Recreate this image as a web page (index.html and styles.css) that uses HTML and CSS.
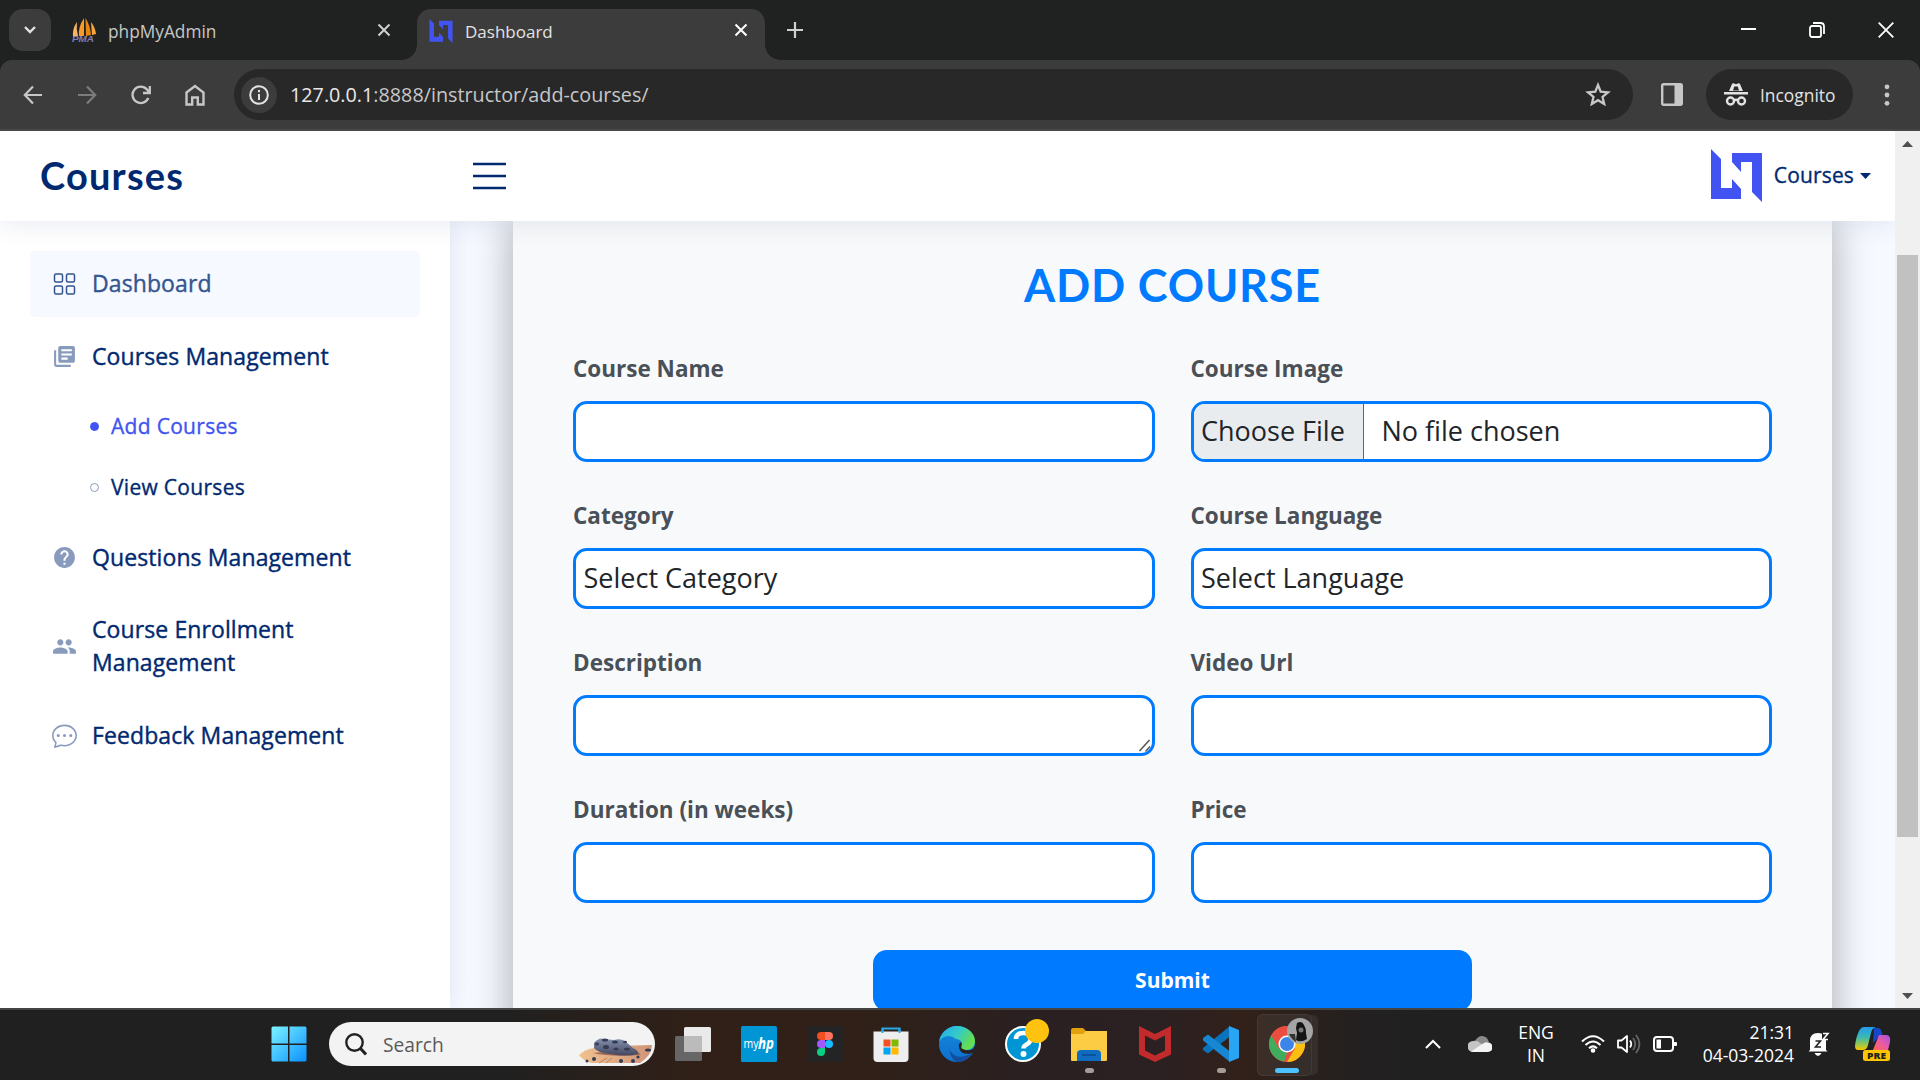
FILE: index.html
```html
<!DOCTYPE html>
<html lang="en">
<head>
<meta charset="utf-8">
<title>Dashboard</title>
<link rel="stylesheet" href="styles.css">
</head>
<body>
<div class="screen">

<header class="tabstrip">
  <div class="tab-search"><svg width="14" height="10" viewBox="0 0 14 10"><path d="M2 2l5 5 5-5" fill="none" stroke="#e3e3e3" stroke-width="2.4"/></svg></div>
  <div class="tab">
    <svg class="favicon" width="26" height="28" viewBox="0 0 26 28">
      <path d="M6 5Q1 12 2 20l5-1Q5 12 6 5z" fill="#f9b463"/><path d="M13 1Q7 10 8 19h5z" fill="#f79a2c"/><path d="M14.500 1l.5 18 5-1Q19 8 14.500 1z" fill="#e8850f"/><path d="M20 5l1 13 4-1Q24 10 20 5z" fill="#f9a33c"/>
      <text class="pma" x="1" y="25" textLength="22" lengthAdjust="spacingAndGlyphs">PMA</text>
    </svg>
    <span class="tab-title t-pma">phpMyAdmin</span>
    <svg class="tab-close" width="14" height="14" viewBox="0 0 14 14"><path d="M1.500 1.500l11 11m0-11l-11 11" stroke="#d0d0d0" stroke-width="2"/></svg>
  </div>
  <div class="tab active">
    <svg class="favicon" width="24" height="24" viewBox="0 0 51 53"><path d="M0 0l10 10v29h11v-9l9 10v10H0zM21 4h30v49l-10-10V13H30v10l-9-10z" fill="#4154f1"/></svg>
    <span class="tab-title t-dash">Dashboard</span>
    <svg class="tab-close" width="14" height="14" viewBox="0 0 14 14"><path d="M1.500 1.500l11 11m0-11l-11 11" stroke="#fff" stroke-width="2"/></svg>
  </div>
  <svg class="new-tab" width="16" height="16" viewBox="0 0 16 16"><path d="M8 0v16M0 8h16" stroke="#d0d0d0" stroke-width="2.200"/></svg>
  <div class="win-controls">
    <svg width="15" height="16" viewBox="0 0 15 16"><path d="M0 7h15" stroke="#fff" stroke-width="2"/></svg>
    <svg width="16" height="16" viewBox="0 0 16 16" fill="none" stroke="#fff" stroke-width="1.800"><rect x="1" y="4" width="11" height="11" rx="2"/><path d="M4 1h7.500Q15 1 15 4.500V12"/></svg>
    <svg width="16" height="16" viewBox="0 0 16 16"><path d="M.7.7l14.600 14.600M15.300.7L.7 15.300" stroke="#fff" stroke-width="1.800"/></svg>
  </div>
</header>

<div class="toolbar">
  <div class="nav-icons">
    <svg width="20" height="20" viewBox="0 0 20 20" fill="none" stroke="#c7c7c7" stroke-width="2.200"><path d="M19 10H2.500M10 1.500L1.800 10l8.200 8.500"/></svg>
    <svg width="20" height="20" viewBox="0 0 20 20" fill="none" stroke="#7c7c7c" stroke-width="2.200"><path d="M1 10h16.500M10 1.500l8.200 8.500-8.200 8.500"/></svg>
    <svg width="20" height="20" viewBox="0 0 20 20" fill="none" stroke="#c7c7c7" stroke-width="2.300"><path d="M17.300 13A8.200 8.200 0 1 1 16 4.500L18.500 7.500M18.800 1v7H12"/></svg>
    <svg width="20" height="22" viewBox="0 0 20 22" fill="none" stroke="#c7c7c7" stroke-width="2.400"><path d="M1.500 8.500L10 2l8.500 6.500v12h-5.700v-7H7.200v7H1.500z"/></svg>
  </div>
  <div class="omnibox">
    <span class="site-info"><svg width="20" height="20" viewBox="0 0 20 20"><circle cx="10" cy="10" r="8.800" fill="none" stroke="#e3e3e3" stroke-width="2"/><path d="M10 9v6M10 5v2.200" stroke="#e3e3e3" stroke-width="2"/></svg></span>
    <span class="url"><b>127.0.0.1</b>:8888/instructor/add-courses/</span>
    <svg class="star" width="26" height="24" viewBox="0 0 26 24"><path d="M13 3l2.700 6.700 7.300.6-5.500 4.700 1.700 7L13 18.200 6.800 22l1.700-7L3 10.300l7.300-.6z" fill="none" stroke="#c7c7c7" stroke-width="2.300"/></svg>
  </div>
  <svg class="panel" width="22" height="23" viewBox="0 0 22 23"><rect x="1.200" y="1.200" width="19.600" height="20.600" rx="1.500" fill="none" stroke="#c7c7c7" stroke-width="2.400"/><path d="M13.500 1h7.500v21h-7.500z" fill="#c7c7c7"/></svg>
  <div class="incognito">
    <svg width="24" height="23" viewBox="0 0 24 23"><path d="M0 9h24v2.500H0zM5 8L8 1q.4-1 1.500-.7L12 1.200 14.500.3Q15.600 0 16 1l3 7z" fill="#e3e3e3"/><path d="M9 7.500L10.300 3.500h3.400L15 7.500z" fill="#282828"/><g fill="none" stroke="#e3e3e3" stroke-width="2.400"><circle cx="6.500" cy="18" r="3.500"/><circle cx="17.500" cy="18" r="3.500"/><path d="M9.500 17.500q2.500-1.500 5 0"/></g></svg>
    <span>Incognito</span>
  </div>
  <svg class="menu" width="6" height="22" viewBox="0 0 6 22" fill="#c7c7c7"><circle cx="3" cy="2.800" r="2.400"/><circle cx="3" cy="11" r="2.400"/><circle cx="3" cy="19.300" r="2.400"/></svg>
</div>

<div class="viewport">
<div class="page">
  <div class="header">
    <span class="brand">Courses</span>
    <svg class="burger" width="33" height="28" viewBox="0 0 33 28"><path d="M0 2h33M0 14h33M0 26h33" stroke="#012970" stroke-width="2.500"/></svg>
    <div class="profile">
      <svg width="51" height="53" viewBox="0 0 51 53"><path d="M0 0l10 10v29h11v-9l9 10v10H0zM21 4h30v49l-10-10V13H30v10l-9-10z" fill="#4154f1"/></svg>
      <span>Courses</span>
      <svg class="caret" width="11" height="6" viewBox="0 0 11 6"><path d="M0 0h11L5.500 6z" fill="#012970"/></svg>
    </div>
  </div>
  <div class="body">
    <nav class="sidebar">
      <a class="item current"><svg width="22" height="22" viewBox="0 0 22 22" fill="none" stroke="#34558f" stroke-width="1.500"><rect x="1" y="1" width="8" height="8" rx="1.500"/><rect x="13" y="1" width="8" height="8" rx="1.500"/><rect x="1" y="13" width="8" height="8" rx="1.500"/><rect x="13" y="13" width="8" height="8" rx="1.500"/></svg><span>Dashboard</span></a>
      <a class="item"><svg width="25" height="25" viewBox="0 0 24 24" fill="#899bbd"><path d="M4 6H2v14c0 1.100.9 2 2 2h14v-2H4V6zm16-4H8c-1.100 0-2 .9-2 2v12c0 1.100.9 2 2 2h12c1.100 0 2-.9 2-2V4c0-1.100-.9-2-2-2zm-1 9H9V9h10v2zm-4 4H9v-2h6v2zm4-8H9V5h10v2z"/></svg><span>Courses Management</span></a>
      <div class="sub">
        <a class="subitem on"><i></i><span>Add Courses</span></a>
        <a class="subitem"><i></i><span>View Courses</span></a>
      </div>
      <a class="item"><svg width="25" height="25" viewBox="0 0 24 24" fill="#899bbd"><path d="M12 2C6.480 2 2 6.480 2 12s4.480 10 10 10 10-4.480 10-10S17.520 2 12 2zm1 17h-2v-2h2v2zm2.070-7.750l-.9.920C13.450 12.900 13 13.500 13 15h-2v-.5c0-1.100.45-2.100 1.170-2.830l1.240-1.260c.37-.36.59-.86.59-1.410 0-1.100-.9-2-2-2s-2 .9-2 2H8c0-2.210 1.790-4 4-4s4 1.790 4 4c0 .88-.36 1.680-.93 2.250z"/></svg><span>Questions Management</span></a>
      <a class="item tall"><svg width="25" height="25" viewBox="0 0 24 24" fill="#899bbd"><path d="M16 11c1.660 0 2.990-1.340 2.990-3S17.660 5 16 5c-1.660 0-3 1.340-3 3s1.340 3 3 3zm-8 0c1.660 0 2.990-1.340 2.990-3S9.660 5 8 5C6.340 5 5 6.340 5 8s1.340 3 3 3zm0 2c-2.330 0-7 1.170-7 3.500V19h14v-2.500c0-2.330-4.670-3.500-7-3.500zm8 0c-.29 0-.62.020-.97.050 1.160.84 1.970 1.970 1.970 3.450V19h6v-2.500c0-2.330-4.670-3.500-7-3.500z"/></svg><span>Course Enrollment<br>Management</span></a>
      <a class="item"><svg width="25" height="25" viewBox="0 0 16 16" fill="#899bbd"><path d="M5 8a1 1 0 1 1-2 0 1 1 0 0 1 2 0zm4 0a1 1 0 1 1-2 0 1 1 0 0 1 2 0zm3 1a1 1 0 1 0 0-2 1 1 0 0 0 0 2z"/><path d="m2.165 15.803.02-.004c1.830-.363 2.948-.842 3.468-1.105A9.060 9.060 0 0 0 8 15c4.418 0 8-3.134 8-7s-3.582-7-8-7-8 3.134-8 7c0 1.760.743 3.370 1.970 4.600a10.437 10.437 0 0 1-.524 2.318l-.003.011a10.722 10.722 0 0 1-.244.637c-.079.186.074.394.273.362a21.673 21.673 0 0 0 .693-.125zm.8-3.108a1 1 0 0 0-.287-.801C1.618 10.830 1 9.468 1 8c0-3.192 3.004-6 7-6s7 2.808 7 6c0 3.193-3.004 6-7 6a8.060 8.060 0 0 1-2.088-.272 1 1 0 0 0-.711.074c-.387.196-1.240.570-2.634.893a10.970 10.970 0 0 0 .398-2z"/></svg><span>Feedback Management</span></a>
    </nav>
    <main class="main">
      <form class="card">
        <h1>ADD COURSE</h1>
        <div class="fields">
          <div class="field"><label>Course Name</label><div class="control"></div></div>
          <div class="field"><label>Course Image</label><div class="control file"><span class="choose">Choose File</span><span class="none">No file chosen</span></div></div>
          <div class="field"><label>Category</label><div class="control">Select Category</div></div>
          <div class="field"><label>Course Language</label><div class="control">Select Language</div></div>
          <div class="field"><label>Description</label><div class="control area"><svg width="14" height="13" viewBox="0 0 14 13"><path d="M1.500 12L11.500 1M7.500 12.500l4.500-5" stroke="#555" stroke-width="1.500"/></svg></div></div>
          <div class="field"><label>Video Url</label><div class="control"></div></div>
          <div class="field"><label>Duration (in weeks)</label><div class="control"></div></div>
          <div class="field"><label>Price</label><div class="control"></div></div>
        </div>
        <div class="submit">Submit</div>
      </form>
    </main>
  </div>
</div>
<div class="scrollbar">
  <svg width="11" height="6" viewBox="0 0 11 6"><path d="M0 6h11L5.500 0z" fill="#505050"/></svg>
  <div class="thumb"></div>
  <svg width="11" height="6" viewBox="0 0 11 6"><path d="M0 0h11L5.500 6z" fill="#505050"/></svg>
</div>
</div>

<footer class="taskbar">
  <div class="slot start"><svg width="36" height="36" viewBox="0 0 36 36"><defs><linearGradient id="win" x1="0" y1="0" x2="1" y2="1"><stop offset="0" stop-color="#7df3ff"/><stop offset="1" stop-color="#0a90ff"/></linearGradient></defs><path d="M2 .5h15v17H.5V2Q.5.500 2 .5zM18.500.5H34q1.500 0 1.500 1.500v15.500h-17zM.5 19H17v16.500H2Q.5 35.500.5 34zM18.500 19h17v15q0 1.500-1.500 1.500H18.500z" fill="url(#win)"/></svg></div>
  <div class="search">
    <svg width="22" height="23" viewBox="0 0 22 23" fill="none" stroke="#222"><circle cx="9.500" cy="9.500" r="8.200" stroke-width="2.400"/><path d="M15.500 15.500l5.500 6" stroke-width="3"/></svg>
    <span>Search</span>
    <svg class="rock" width="74" height="28" viewBox="0 0 74 28"><defs><linearGradient id="rk" x1="0" y1="0" x2="0" y2="1"><stop offset="0" stop-color="#8492ae"/><stop offset="1" stop-color="#45465f"/></linearGradient><linearGradient id="sand" x1="0" y1="0" x2="1" y2="0"><stop offset="0" stop-color="#f0c38f"/><stop offset="1" stop-color="#cf9478"/></linearGradient></defs><path d="M0 18Q6 12 16 11l22-2 35-1q0 10-12 18H12Q3 23 0 18z" fill="url(#sand)"/><path d="M14 16Q30 20 62 18l-6-6z" fill="#a46a55"/><path d="M15 6Q20 0 25 2l10 1q8-2 12 2l7 6q6 3 5 6-12 3-28 0-12-1-16-6z" fill="url(#rk)"/><g fill="#363b55"><ellipse cx="26" cy="3" rx="3" ry="1.500"/><ellipse cx="36" cy="5" rx="3" ry="1.600"/><ellipse cx="46" cy="5" rx="2" ry="1.200"/><ellipse cx="18" cy="7" rx="2" ry="1.500"/><ellipse cx="27" cy="10" rx="3" ry="2"/><ellipse cx="37" cy="12" rx="2.500" ry="1.500"/><ellipse cx="48" cy="12" rx="3" ry="1.500"/><circle cx="8" cy="24" r="1.500"/><circle cx="15" cy="22" r="2"/><circle cx="42" cy="24" r="2"/><circle cx="54" cy="24" r="2"/><circle cx="59" cy="20" r="1.600"/><ellipse cx="69" cy="13" rx="3" ry="1.500"/></g><path d="M20 26l8-5M27 26l6-5" stroke="#bd8260"/></svg>
  </div>
  <div class="slot"><svg width="36" height="36" viewBox="0 0 36 36"><rect x="9" y="1" width="27" height="25" rx="1.500" fill="#eaeaea"/><rect y="10" width="27" height="25" rx="1.500" fill="#666"/><rect x="9" y="10" width="18" height="16" fill="#bbb"/></svg></div>
  <div class="slot"><svg width="36" height="36" viewBox="0 0 36 36"><rect width="36" height="36" rx="1.500" fill="#0096d6"/><g fill="#fff" class="hp"><text x="2.500" y="22" font-size="12.500" textLength="15" lengthAdjust="spacingAndGlyphs">my</text><text x="17" y="23" font-size="16" font-weight="bold" font-style="italic" textLength="16" lengthAdjust="spacingAndGlyphs">hp</text></g></svg></div>
  <div class="slot"><svg width="36" height="36" viewBox="0 0 36 36"><rect width="36" height="36" rx="2" fill="#242424"/><path d="M18 6h-4a4 4 0 0 0 0 8h4z" fill="#f24e1e"/><path d="M18 6h4a4 4 0 0 1 0 8h-4z" fill="#ff7262"/><path d="M18 14h-4a4 4 0 0 0 0 8h4z" fill="#a259ff"/><circle cx="22" cy="18" r="4" fill="#1abcfe"/><path d="M18 22h-4a4 4 0 1 0 4 4z" fill="#0acf83"/></svg></div>
  <div class="slot"><svg width="36" height="36" viewBox="0 0 36 36"><path d="M9.500 9V2.500h17V9" fill="none" stroke="#25a9e8" stroke-width="2"/><path d="M.5 5.500h35V32q0 4-4 4h-27q-4 0-4-4z" fill="#eee"/><path d="M9.500 2.500V7M26.500 2.500V7" stroke="#25a9e8" stroke-width="2"/><path d="M10.500 13.500h7v7h-7z" fill="#f25022"/><path d="M18.500 13.500h7v7h-7z" fill="#7fba00"/><path d="M10.500 21.500h7v7h-7z" fill="#00a4ef"/><path d="M18.500 21.500h7v7h-7z" fill="#ffb900"/></svg></div>
  <div class="slot"><svg width="36" height="36" viewBox="0 0 36 36"><defs><linearGradient id="e1" x1="0" y1="0" x2="1" y2=".5"><stop offset="0" stop-color="#25a8ea"/><stop offset=".5" stop-color="#30c8cf"/><stop offset="1" stop-color="#65df4f"/></linearGradient><linearGradient id="e2" x1="0" y1="0" x2="0" y2="1"><stop offset="0" stop-color="#1689dc"/><stop offset="1" stop-color="#0d6fce"/></linearGradient></defs><circle cx="18" cy="18" r="18" fill="url(#e2)"/><path d="M10.500 19C9 27 17 32 24 30.500q5-.8 8.800-3.200Q28 36 18 36 10 33 10.500 19z" fill="#134d9c"/><path d="M0 16C1 7 9 0 18 0c10 0 18 7 18 15 0 6-4 9-9 9-4 0-6-2-5-4 2-4-1-7-5-7Q12 9 6.500 10.500 1.500 12 0 16z" fill="url(#e1)"/><path d="M22 19q-2 3 1 5 5 2.500 11-1l2-3v5l-3 2.300q-9 2-12-3-2-4 1-5.300z" fill="#2a201d"/><path d="M22 16q-3 2-2 5 1.500 5 8 5 3 0 6-2-6 1-9-.5-3.500-1-2.500-3.500 1-2-.5-4z" fill="#2a201d"/></svg></div>
  <div class="slot help-slot"><svg width="36" height="36" viewBox="0 0 36 36"><circle cx="18" cy="18" r="17" fill="#0096d6" stroke="#fff" stroke-width="2"/><path d="M11 13q0-6 7.500-6t7 6q0 3.500-4 5.500-3 1.500-3 4" fill="none" stroke="#fff" stroke-width="4.500"/><circle cx="18.500" cy="28" r="3" fill="#fff"/></svg><i class="badge"></i></div>
  <div class="slot running"><svg width="36" height="36" viewBox="0 0 36 36"><path d="M0 4q0-2 2-2h10l3 3v6H0z" fill="#e2a00c"/><path d="M0 8h12l3-3h21v29q0 1-1 1H1q-1 0-1-1z" fill="#fdcc45"/><path d="M6 35V28q0-4 4-4h16q4 0 4 4v7z" fill="#0f6cc0"/><path d="M11 29h14" stroke="#084a91" stroke-width="1.500"/></svg></div>
  <div class="slot"><svg width="32" height="36" viewBox="0 0 32 36"><path fill-rule="evenodd" d="M0 0l16 8L32 0v28.500L16 36 0 28.500zM6 9.500V24.500l10 5 10-5V9.500l-10 5z" fill="#c12b2b"/></svg></div>
  <div class="slot running"><svg width="36" height="36" viewBox="0 0 36 36"><path d="M27 0v10.500L5 27.500 0 24v-2z" fill="#0a73bd"/><path d="M27 36V25.500L5 8.500 0 12v2.500z" fill="#1787d3"/><path d="M26 0l10 4v28l-10 4z" fill="#29a5f4"/></svg></div>
  <div class="slot chrome running"><svg width="36" height="36" viewBox="0 0 36 36"><circle cx="18" cy="18" r="18" fill="#ea4335"/><path d="M2.400 9L10.200 22.500 18 27l-3 8.700A18 18 0 0 1 2.400 9z" fill="#34a853"/><path d="M33.600 9A18 18 0 0 1 18 36l7.800-13.500L18 9z" fill="#fbbc04"/><path d="M2.400 9A18 18 0 0 1 33.600 9H18l-7.800 13.500z" fill="#ea4335"/><circle cx="18" cy="18" r="8.500" fill="#fff"/><circle cx="18" cy="18" r="7" fill="#2f7de9"/></svg>
    <svg class="avatar" width="26" height="26" viewBox="0 0 26 26"><circle cx="13" cy="13" r="13" fill="#a5a5a5"/><path d="M10 5q5-3 7 2 2 3 2 8l1 6q-6 4-11 1l1-7-1-5z" fill="#151515"/><path d="M2 16q3 6 7 8l-1-8z" fill="#333"/><circle cx="14" cy="12" r="2.500" fill="#777"/></svg>
  </div>
  <div class="tray">
    <svg class="chev" width="16" height="10" viewBox="0 0 16 10"><path d="M1 9l7-7 7 7" fill="none" stroke="#fff" stroke-width="2"/></svg>
    <svg class="cloud" width="24" height="16" viewBox="0 0 24 16"><path d="M7 5Q10 0 14 0q5 0 7 6l-8 4z" fill="#8b8b8b"/><path d="M5 16a5 5 0 0 1 0-11q4-1 7 2l5 3-6 6z" fill="#c4c4c4"/><path d="M3 15.500L16 7q2-1 4-.5a4.700 4.700 0 0 1 0 9.500H5z" fill="#f4f4f4"/></svg>
    <div class="lang">ENG<br>IN</div>
    <svg class="wifi" width="24" height="18" viewBox="0 0 24 18" fill="none" stroke="#fff" stroke-width="2"><path d="M1 6.500q11-10.500 22 0M4.500 10q7.500-7 15 0M8 13.200q4-3.600 8 0"/><circle cx="12" cy="15.500" r="1.300" fill="#fff"/></svg>
    <svg class="vol" width="24" height="20" viewBox="0 0 24 20" fill="none" stroke-width="1.800"><path d="M1 6.500h3.500L10 2v16l-5.500-4.500H1z" stroke="#fff" stroke-linejoin="round"/><path d="M13 6.500q2.500 3.500 0 7" stroke="#fff"/><path d="M16 4q4.500 6 0 12M19 1q7 9 0 18" stroke="#666"/></svg>
    <svg class="bat" width="24" height="16" viewBox="0 0 24 16"><rect x="1" y="1" width="19" height="14" rx="3" fill="none" stroke="#fff" stroke-width="2"/><path d="M3.500 3.500H8v9H3.500zM21 6h2q1 0 1 1v2q0 1-1 1h-2z" fill="#fff"/></svg>
    <div class="clock">21:31<br>04-03-2024</div>
    <svg class="bell" width="22" height="24" viewBox="0 0 22 24"><path d="M2 18V9q0-8 8-8 8 0 8 8v9l1.500 1.500H.5zM6.500 21h7q-1.500 3-3.500 3t-3.500-3z" fill="#fff"/><path d="M7.500 9h5l-5 6h5.500" fill="none" stroke="#222" stroke-width="1.600"/><path d="M14 0h8v8h-8z" fill="#202020"/><path d="M15 1.500h5l-5 6h5" fill="none" stroke="#fff" stroke-width="1.600"/></svg>
    <svg class="copilot" width="36" height="36" viewBox="0 0 36 36"><defs><linearGradient id="c1" x1="0" y1="0" x2="0" y2="1"><stop offset="0" stop-color="#249cf0"/><stop offset=".45" stop-color="#3bb9b0"/><stop offset=".8" stop-color="#a7c940"/><stop offset="1" stop-color="#ffc400"/></linearGradient><linearGradient id="c2" x1="0" y1="1" x2="1" y2="0"><stop offset="0" stop-color="#ff6a4b"/><stop offset=".5" stop-color="#ea5aa6"/><stop offset="1" stop-color="#a052e8"/></linearGradient></defs><path d="M19 2h4q3 0 4 5l1 3q-5 0-7 4l-3 3z" fill="#1747c8"/><path d="M9 1h12q-4 1-5 6l-3 12q-1 5-5 5H3q-3 0-3-4 1-9 4-15 2-4 5-4z" fill="url(#c1)"/><path d="M24 9h8q4 1 3 7l-2 8H18z" fill="url(#c2)"/><rect x="8" y="24" width="27" height="11" rx="2.500" fill="#ffc400"/><text class="pre" x="12" y="33" textLength="19" lengthAdjust="spacingAndGlyphs">PRE</text></svg>
  </div>
</footer>
</div>
</body>
</html>
```

FILE: styles.css
```css
* { box-sizing: border-box; }
body { margin: 0; font-family: "Open Sans", "Noto Sans", sans-serif; }
svg { display: block; flex: none; }
.screen { width: 1920px; height: 1080px; display: flex; flex-direction: column; overflow: hidden; background: #202221; }

/* browser tabs */
.tabstrip { height: 60px; flex: none; display: flex; align-items: flex-end; padding-left: 9px; background: #202221; }
.tab-search { width: 42px; height: 42px; margin-bottom: 9px; border-radius: 14px; background: #3c3c3c; display: grid; place-items: center; }
.tab { height: 51px; display: flex; align-items: center; padding: 0 26px 7px 20px; width: 366px; color: #c7c7c7; }
.tab.active { width: 348px; background: #3c3c3c; border-radius: 14px 14px 0 0; color: #e3e3e3; padding-left: 12px; padding-right: 17px; position: relative; }
.tab.active::before, .tab.active::after { content: ""; position: absolute; bottom: 0; width: 15px; height: 15px; }
.tab.active::before { left: -15px; background: radial-gradient(circle at 0 0, transparent 14.500px, #3c3c3c 15px); }
.tab.active::after { right: -15px; background: radial-gradient(circle at 100% 0, transparent 14.500px, #3c3c3c 15px); }
.tab-title { margin-left: 11px; padding-top: 2px; line-height: 24px; white-space: nowrap; }
.t-pma { font-size: 17.300px; }
.t-dash { font-size: 17px; margin-left: 12px; }
.tab-close { margin-left: auto; margin-bottom: 2px; }
.pma { font: italic bold 8.500px "Liberation Sans", sans-serif; fill: #7d7dc0; }
.new-tab { margin: 0 0 22px 22px; }
.win-controls { margin-left: auto; display: flex; gap: 53px; padding: 0 26px 22px 0; }

/* browser toolbar */
.toolbar { height: 71px; flex: none; background: #3c3c3c; border-bottom: 2px solid #474747; border-radius: 12px 12px 0 0; display: flex; align-items: center; padding: 0 30px 0 23px; }
.nav-icons { display: flex; align-items: center; gap: 34px; width: 211px; }
.omnibox { width: 1399px; height: 51px; border-radius: 26px; background: #282828; display: flex; align-items: center; padding: 0 22px 0 7px; }
.site-info { width: 36px; height: 36px; border-radius: 50%; background: #3c3c3c; display: grid; place-items: center; }
.url { margin-left: 13px; font-size: 19.750px; color: #c7c7c7; white-space: nowrap; }
.url b { font-weight: 400; color: #e8e8e8; }
.star { margin: 0 0 2px auto; }
.panel { margin-left: 28px; }
.incognito { margin-left: 23px; width: 147px; height: 51px; border-radius: 26px; background: #282828; display: flex; align-items: center; padding-left: 18px; gap: 12px; color: #e3e3e3; font-size: 17.400px; }
.menu { margin-left: auto; }

/* page */
.viewport { height: 877px; flex: none; display: flex; background: #f6f9ff; }
.page { width: 1895px; display: flex; flex-direction: column; overflow: hidden; }
.header { height: 90px; flex: none; position: relative; z-index: 3; background: #fff; box-shadow: 0 2px 25px rgba(1,41,112,.1); display: flex; align-items: center; padding: 0 24px 0 40px; }
.brand { width: 432.500px; padding-bottom: 3px; font-family: Lato, sans-serif; font-weight: 700; font-size: 38px; letter-spacing: 1.200px; color: #012970; }
.profile { margin-left: auto; padding-bottom: 1px; display: flex; align-items: center; color: #012970; font-weight: 500; font-size: 21px; letter-spacing: .150px; -webkit-text-stroke: .35px; }
.profile span { margin-left: 12px; padding-bottom: 1px; }
.caret { margin-left: 6px; }
.body { flex: 1; min-height: 0; display: flex; }
.sidebar { width: 450px; flex: none; background: #fff; position: relative; z-index: 2; box-shadow: 0 0 25px rgba(1,41,112,.1); padding: 30px; display: flex; flex-direction: column; gap: 6.500px; }
.item { height: 66px; flex: none; border-radius: 5px; display: flex; align-items: center; padding: 0 0 1px 22px; color: #012970; font-size: 23px; font-weight: 500; letter-spacing: .100px; -webkit-text-stroke: .4px; line-height: 33px; white-space: nowrap; }
.item > svg { width: 25px; margin-right: 15px; }
.item.tall { height: 99px; }
.current { background: #f6f9ff; color: #34558f; }
.sub { display: flex; flex-direction: column; }
.subitem { height: 61px; display: flex; align-items: center; padding: 0 0 1px 60px; font-size: 21px; font-weight: 500; letter-spacing: .300px; -webkit-text-stroke: .35px; color: #012970; }
.subitem i { width: 9px; height: 9px; border-radius: 50%; border: 1px solid #899bbd; margin-right: 12px; }
.subitem span { padding-bottom: 1px; }
.subitem.on { color: #4154f1; }
.on i { background: #4154f1; border-color: #4154f1; }

.main { flex: 1; padding: 0 63px; }
.card { height: 830px; background: #f8f9fa; box-shadow: 0 0 38px rgba(0,0,0,.33); padding: 0 60px; }
h1 { margin: 0; padding-top: 33px; height: 129px; text-align: center; font: 700 45px/62px Lato, sans-serif; letter-spacing: .800px; color: #007bff; }
.fields { display: grid; grid-template-columns: 1fr 1fr; column-gap: 36px; row-gap: 35px; }
.field label { display: block; height: 51px; padding-top: 1px; font-size: 22.500px; line-height: 36px; font-weight: 700; color: #495057; }
.control { height: 61px; border: 3px solid #007bff; border-radius: 14px; background: #fff; overflow: hidden; display: flex; align-items: center; padding: 0 0 2px 7.500px; font-size: 27px; color: #212529; }
.file { padding: 0; align-items: stretch; line-height: 53px; }
.choose { width: 170px; background: #e9ecef; border-right: 1px solid #007bff; padding-left: 7.500px; white-space: nowrap; }
.none { padding-left: 18px; }
.area { justify-content: flex-end; align-items: flex-end; padding-bottom: 1px; }
.submit { width: 599px; height: 61px; padding-bottom: 2px; margin: 47px auto 0; border-radius: 14px; background: #007bff; color: #fff; font-size: 21px; font-weight: 700; display: grid; place-items: center; }

.scrollbar { width: 25px; background: #f0f0f0; display: flex; flex-direction: column; align-items: center; padding: 10px 0 9px; }
.thumb { width: 21px; height: 582px; background: #c1c1c1; margin: 108px 0 auto; }

/* taskbar */
.taskbar { height: 72px; flex: none; border-top: 2px solid #444; display: flex; align-items: center; padding: 0 29px 2px 256px; color: #fff; background: linear-gradient(90deg, #202020 500px, #302018 690px, #302018 860px, #2a2022 1040px, #2b2022 1160px, #32211a 1240px, #222020 1370px, #202020 1500px); }
.slot { width: 66px; height: 60px; display: grid; place-items: center; position: relative; flex: none; }
.search { width: 326px; height: 44px; margin: 0 5px 0 7px; background: #f3f3f3; border-radius: 22px; display: flex; align-items: center; padding: 0 2px 0 16px; flex: none; color: #5a5a5a; font-size: 19.200px; overflow: hidden; }
.search span { margin-left: 16px; }
.rock { margin: 14px 0 0 auto; }
.hp { font-family: "Open Sans", sans-serif; }
.badge { position: absolute; left: 35px; top: 5px; width: 24px; height: 24px; border-radius: 50%; background: #ffc20e; }
.running::after { content: ""; position: absolute; bottom: 1px; left: 29px; width: 9px; height: 5px; border-radius: 3px; background: #a39c99; }
.chrome::before { content: ""; position: absolute; z-index: 0; left: 3px; top: 0; width: 53px; height: 60px; border-radius: 6px; background: rgba(255,255,255,.06); border: 1px solid rgba(255,255,255,.06); box-shadow: 7px 0 0 -1px rgba(255,255,255,.06); }
.chrome::after { left: 21px; width: 24px; background: #4cc2ff; }
.avatar { position: absolute; left: 33px; top: 4px; }
.tray { margin-left: auto; display: flex; align-items: center; height: 68px; }
.lang, .clock { font-size: 17.500px; line-height: 23px; white-space: nowrap; }
.lang { width: 36px; text-align: center; margin: 0 27px 0 26px; }
.cloud { margin-left: 27px; }
.vol, .bat { margin-left: 12px; }
.clock { width: 94px; text-align: right; margin-left: 23px; display: flex; justify-content: flex-end; }
.bell { margin-left: 14px; }
.copilot { margin-left: 25px; }
.pre { font: 800 9.500px "Open Sans", sans-serif; fill: #222; }
```
